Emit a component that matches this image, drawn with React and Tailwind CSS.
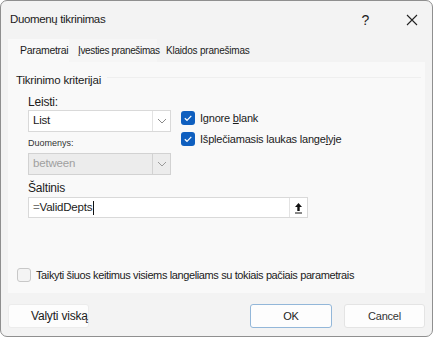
import React from "react";

const Check = ({ checked }) =>
	checked ? (
		<span className="w-[14px] h-[14px] rounded-[3px] bg-[#0f5fbf] flex items-center justify-center shrink-0">
			<svg width="10" height="10" viewBox="0 0 10 10">
				<path d="M1.8 5.2 L4 7.3 L8.3 2.8" fill="none" stroke="#ffffff" strokeWidth="1.2" />
			</svg>
		</span>
	) : (
		<span className="w-[14px] h-[14px] rounded-[3px] border border-[#c8c8c8] bg-[#f4f4f4] shrink-0" />
	);

const Chevron = ({ color }) => (
	<svg width="10" height="6" viewBox="0 0 10 6">
		<path d="M1 1 L5 5 L9 1" fill="none" stroke={color} strokeWidth="1" />
	</svg>
);

const Select = ({ value, disabled }) => (
	<div
		className={`flex h-[22px] w-[143px] border ${
			disabled ? "bg-[#ececec] border-[#d2d2d2] text-[#a0a0a0]" : "bg-white border-[#d9d9d9] text-[#1a1a1a]"
		}`}
	>
		<div className="flex-1 flex items-center pl-[4px] text-[11.5px]">{value}</div>
		<div className={`w-[18px] flex items-center justify-center border-l ${disabled ? "border-[#d2d2d2]" : "border-[#e3e3e3]"}`}>
			<Chevron color={disabled ? "#9a9a9a" : "#8a8a8a"} />
		</div>
	</div>
);

export default function App() {
	return (
		<div
			className="w-[433px] h-[337px] bg-[#f3f3f3] border border-[#8f8f8f] rounded-[7px] flex flex-col text-[#1b1b1b] overflow-hidden whitespace-nowrap tracking-[-0.2px]"
			style={{ fontFamily: '"Liberation Sans", Arial, sans-serif' }}
		>
			<div className="h-[38px] shrink-0 flex items-center pl-[9px] pr-[14px] text-[11.5px] tracking-[-0.35px]">
				<span className="flex-1">Duomenų tikrinimas</span>
				<span className="text-[14px] mr-[37px]">?</span>
				<svg width="12" height="12" viewBox="0 0 12 12">
					<path d="M1 1 L11 11 M11 1 L1 11" stroke="#222" strokeWidth="1.1" />
				</svg>
			</div>

			<div className="h-[23px] shrink-0 flex items-stretch pl-[7px] text-[10.5px] tracking-[-0.3px]">
				<div className="w-[61px] bg-[#f9f9f9] flex items-center pl-[12px]">Parametrai</div>
				<div className="w-[88px] bg-[#f6f6f6] flex items-center pl-[9px] text-[10px] tracking-[-0.35px]">Įvesties pranešimas</div>
				<div className="flex items-center pl-[9px] text-[10px] tracking-[-0.2px]">Klaidos pranešimas</div>
			</div>

			<div className="mx-[7px] h-[231px] shrink-0 bg-[#f9f9f9] flex flex-col pl-[8px] pr-[4px] text-[11px]">
				<div className="mt-[10px] flex items-center gap-[6px]">
					<span className="text-[11.5px] leading-[16px]">Tikrinimo kriterijai</span>
					<div className="flex-1 h-px bg-[#efefef] mt-[-6px]" />
				</div>

				<div className="flex pl-[12px] mt-[6px]">
					<div className="flex flex-col w-[143px]">
						<span className="text-[12px] leading-[16px]">Leisti:</span>
						<Select value="List" />
						<span className="text-[9px] leading-[14px] mt-[4px] text-[#333] tracking-normal">Duomenys:</span>
						<div className="mt-[3px]">
							<Select value="between" disabled />
						</div>
					</div>
					<div className="flex flex-col ml-[10px] mt-[17px] gap-[7px]">
						<div className="flex items-center gap-[5px] leading-[14px]">
							<Check checked />
							<span>
								Ignore <span className="underline">b</span>lank
							</span>
						</div>
						<div className="flex items-center gap-[5px] leading-[14px]">
							<Check checked />
							<span>
								Išplečiamasis laukas lange<span className="underline">l</span>yje
							</span>
						</div>
					</div>
				</div>

				<div className="pl-[12px] mt-[5px] flex flex-col">
					<span className="text-[12px] leading-[16px]">Šaltinis</span>
					<div className="mt-[1px] w-[280px] h-[21px] bg-white border border-[#d9d9d9] flex">
						<div className="flex-1 flex items-center pl-[4px] text-[11.5px]">
							<span className="text-[#777]">=</span>ValidDepts<span className="w-px h-[14px] bg-[#111] ml-px" />
						</div>
						<div className="w-[18px] flex items-center justify-center border-l border-[#e3e3e3]">
							<svg width="9" height="12" viewBox="0 0 9 12">
								<path d="M4.5 1 L1 5 H3.3 V9 H5.7 V5 H8 Z" fill="#111" />
								<path d="M1 11 H8" stroke="#111" strokeWidth="1" />
							</svg>
						</div>
					</div>
				</div>

				<div className="mt-auto mb-[10px] flex items-center gap-[5px] pl-[1px]">
					<Check />
					<span className="tracking-[-0.38px]">Taikyti šiuos keitimus visiems langeliams su tokiais pačiais parametrais</span>
				</div>
			</div>

			<div className="flex mt-[11px] px-[7px] text-[11px]">
				<div className="w-[81px] h-[24px] bg-[#fdfdfd] border border-[#ececec] rounded-[3px] flex items-center pl-[22px] text-[12px]">
					Valyti viską
				</div>
				<div className="flex-1" />
				<div className="w-[82px] h-[24px] bg-[#fdfdfd] border border-[#93b7d9] rounded-[3px] flex items-center justify-center">
					OK
				</div>
				<div className="w-[81px] h-[24px] ml-[12px] bg-[#fdfdfd] border border-[#e4e4e4] rounded-[3px] flex items-center justify-center text-[#333]">
					Cancel
				</div>
			</div>
		</div>
	);
}
